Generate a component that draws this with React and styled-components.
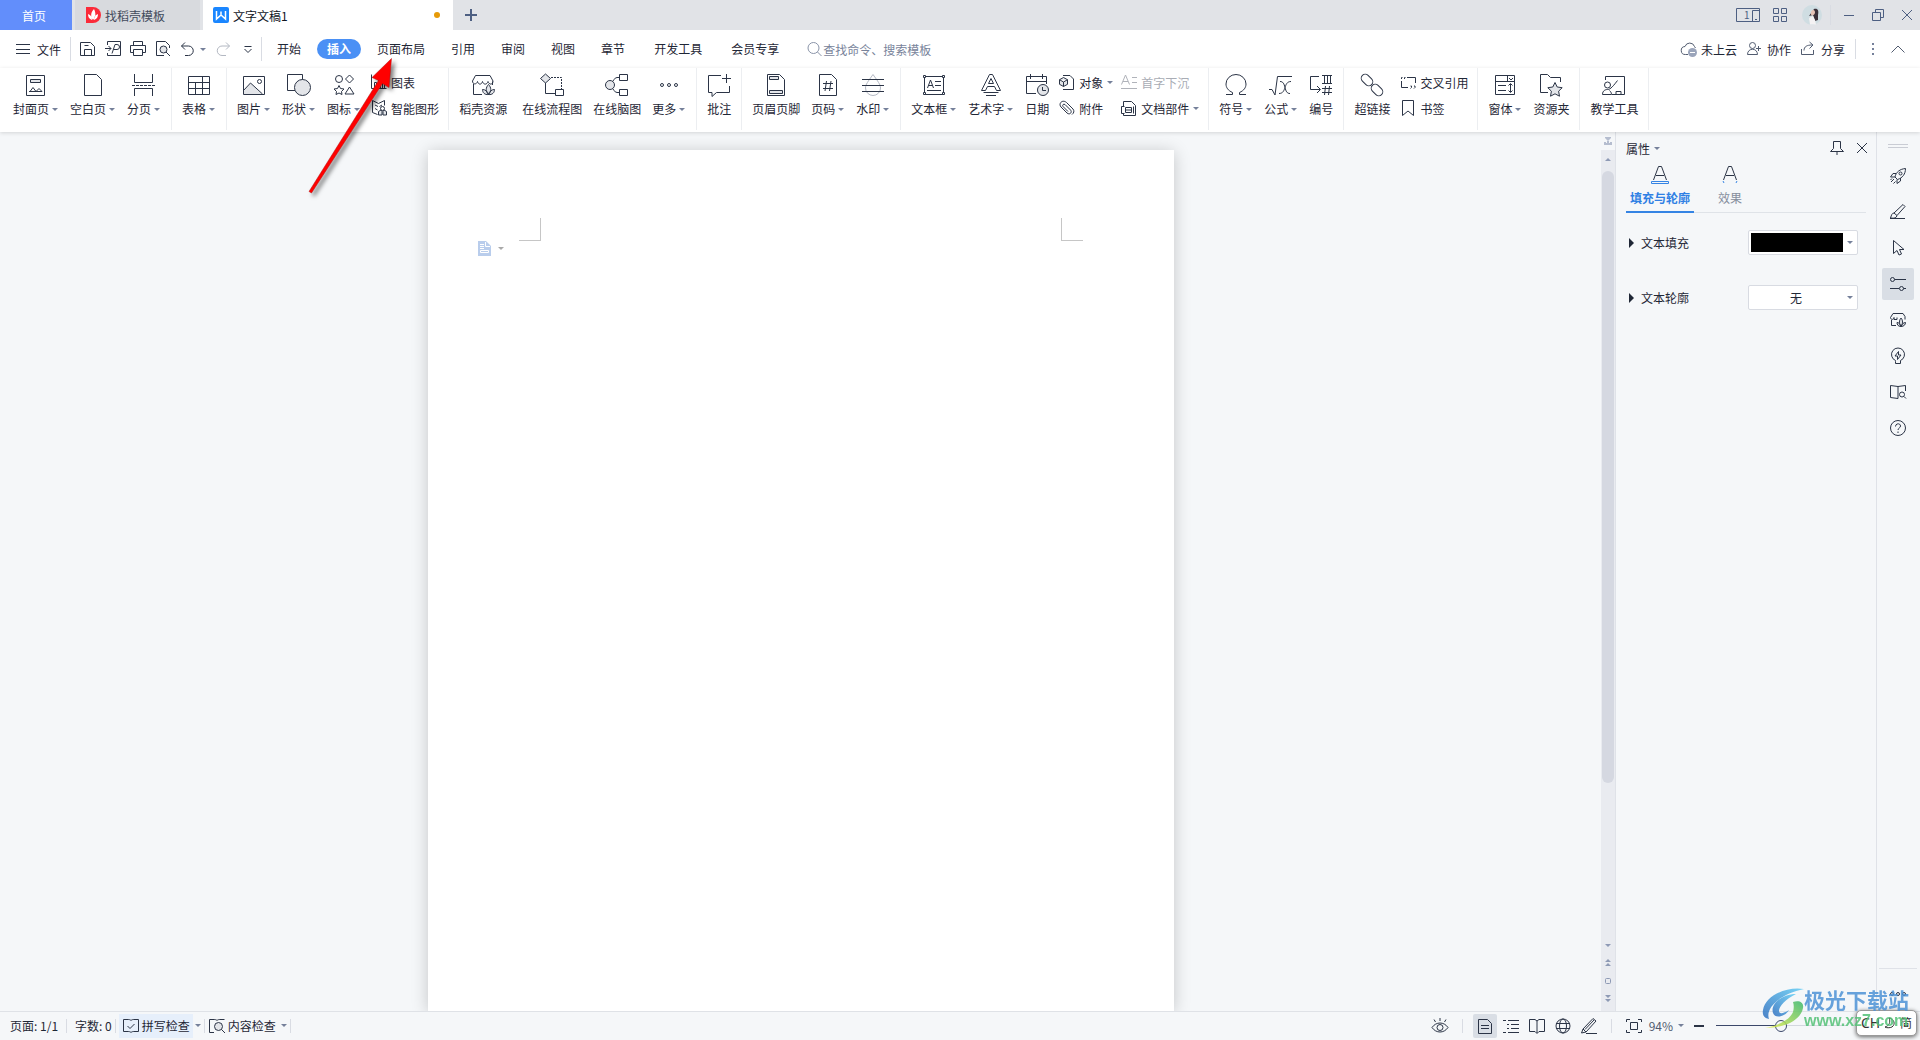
import React, { useState } from 'react'
import styled, { createGlobalStyle, css } from 'styled-components'

const GlobalStyle = createGlobalStyle`
    * {
        box-sizing: border-box;
    }
    body {
        margin: 0;
        background-color: #f5f7f9;
    }
    body, button, input, select {
        font-family: 'Noto Sans CJK SC', 'Noto Sans', sans-serif;
        font-size: 12px;
        color: #1f2736;
    }
    button {
        padding: 0;
        border: none;
        background: none;
        cursor: pointer;
        white-space: nowrap;
    }
`

const Window = styled.div`
    position: relative;
    display: flex;
    flex-direction: column;
    min-height: 100vh;
    overflow: hidden;
    line-height: 18px;
`

const Svg = styled.svg`
    display: block;
    flex: none;
    fill: none;
    stroke: ${props => props.$color || '#2b3446'};
    stroke-width: 1;
    overflow: visible;
`

const Caret = styled.span`
    flex: none;
    width: 0;
    height: 0;
    border-left: 3px solid transparent;
    border-right: 3px solid transparent;
    border-top: 3px solid ${props => props.$color || '#75809a'};
`

const Divider = styled.span`
    flex: none;
    width: 1px;
    height: ${props => props.$height || 24}px;
    margin: 0 ${props => props.$gap || 0}px;
    background-color: #d9dce3;
`

/* ---------- title bar ---------- */

const TitleBar = styled.header`
    display: flex;
    align-items: center;
    height: 30px;
    padding-right: 2px;
    background-color: #e1e3e7;
`
const HomeTab = styled.button`
    width: 72px;
    height: 30px;
    margin-right: 3px;
    padding-right: 4px;
    color: white;
    background-color: #628efb;
`
const DocTab = styled.button`
    display: flex;
    align-items: center;
    gap: 4px;
    height: 30px;
    width: ${props => props.$active ? 250 : 125}px;
    margin-right: ${props => props.$active ? 6 : 3}px;
    padding: 0 13px 0 ${props => props.$active ? 9 : 10}px;
    color: ${props => props.$active ? '#10151f' : '#434b5c'};
    background-color: ${props => props.$active ? '#ffffff' : '#d8dade'};
`
const UnsavedDot = styled.i`
    width: 6px;
    height: 6px;
    margin-left: auto;
    border-radius: 50%;
    background-color: #e69a08;
`
const IconButton = styled.button`
    display: flex;
    align-items: center;
    justify-content: center;
    flex: none;
    width: ${props => props.$size || 24}px;
    height: ${props => props.$size || 24}px;
    border-radius: 2px;
    background-color: ${props => props.$active ? '#d9dee5' : 'transparent'};
`
const WindowTools = styled.div`
    display: flex;
    align-items: center;
    margin-left: auto;
    gap: 4px;
`
const WindowButtons = styled.div`
    display: flex;
    align-items: center;
    gap: 7px;
`

/* ---------- menu ---------- */

const MenuBar = styled.nav`
    display: flex;
    align-items: center;
    height: 38px;
    padding: 0 14px 0 16px;
    background-color: white;
`
const MenuButton = styled.button`
    display: flex;
    align-items: center;
    gap: ${props => props.$gap || 4}px;
`
const QuickTools = styled.div`
    display: flex;
    align-items: center;
    gap: 9px;
`
const MenuTabs = styled.div`
    display: flex;
    gap: 6px;
`
const MenuTab = styled.button`
    height: 20px;
    padding: 0 ${props => props.$wide ? 13 : 10}px;
    border-radius: 10px;
    line-height: 20px;
    ${props => props.$active && css`
        color: white;
        font-weight: bold;
        background-color: #4a90f5;
    `}
`
const SearchLabel = styled.label`
    display: flex;
    align-items: center;
    margin-left: 18px;
`
const SearchInput = styled.input`
    width: 130px;
    padding: 0;
    border: none;
    outline: none;
    background: transparent;
    &::placeholder {
        color: #78839a;
        opacity: 1;
    }
`
const MenuRight = styled.div`
    display: flex;
    align-items: center;
    gap: 10px;
    margin-left: auto;
`

/* ---------- ribbon ---------- */

const Ribbon = styled.section`
    position: relative;
    z-index: 1;
    display: flex;
    height: 64px;
    padding: 0 3px 2px;
    background-color: white;
    box-shadow: 0 1px 4px rgba(0, 0, 0, 0.14);
`
const Group = styled.div`
    display: flex;
    gap: 1px;
    padding: 0 5px;
    border-right: 1px solid #eceef1;
`
const BigButton = styled.button`
    display: flex;
    flex-direction: column;
    align-items: center;
    gap: 3px;
    padding: 5px ${props => props.$caret ? 6 : 5}px 0 5px;
    margin-right: ${props => props.$spaced ? 4 : 0}px;
    line-height: 18px;
`
const BigLabel = styled.span`
    display: flex;
    align-items: center;
    gap: 3px;
`
const SmallGrid = styled.div`
    display: grid;
    grid-template-rows: 26px 26px;
    grid-auto-flow: column;
    padding-top: 1px;
`
const SmallButton = styled.button`
    display: flex;
    align-items: center;
    gap: 4px;
    padding: 0 4px;
    color: ${props => props.disabled ? '#a9adb5' : '#1f2736'};
`

/* ---------- document area ---------- */

const Body = styled.main`
    display: flex;
    flex: 1;
`
const Workspace = styled.div`
    display: flex;
    justify-content: center;
    flex: 1;
    padding-top: 18px;
    overflow: hidden;
`
const Paper = styled.article`
    width: 746px;
    padding: 68px 50px 0;
    background-color: white;
    box-shadow: 0 2px 16px rgba(0, 0, 0, 0.2);
`
const MarginMarks = styled.div`
    display: flex;
    justify-content: space-between;
    padding: 0 41px;
`
const MarginMark = styled.i`
    width: 22px;
    height: 23px;
    border: 0 solid #c6c6c6;
    border-bottom-width: 1px;
    ${props => props.$right ? 'border-left-width: 1px;' : 'border-right-width: 1px;'}
`
const PageOptions = styled.button`
    display: flex;
    align-items: center;
    gap: 7px;
`
const ScrollBar = styled.div`
    display: flex;
    flex-direction: column;
    width: 14px;
`
const ScrollRuler = styled.button`
    display: flex;
    align-items: center;
    justify-content: center;
    height: 18px;
`
const ScrollTrack = styled.div`
    display: flex;
    flex-direction: column;
    flex: 1;
    padding-bottom: 3px;
    background-color: #e9ebf0;
`
const ScrollRail = styled.div`
    flex: 1;
    padding: 0 1px;
`
const ScrollThumb = styled.div`
    height: 80%;
    border-radius: 6px;
    background-color: #d5d8e1;
`
const ScrollButton = styled.button`
    display: flex;
    align-items: center;
    justify-content: center;
    height: ${props => props.$first ? 21 : 18}px;
    padding-bottom: ${props => props.$first ? 3 : 0}px;
`

/* ---------- properties panel ---------- */

const Panel = styled.aside`
    width: 262px;
    padding-left: 10px;
    border: 0 solid #dfe2e8;
    border-width: 0 1px;
`
const PanelHead = styled.div`
    display: flex;
    align-items: center;
    gap: 1px;
    height: 32px;
    padding-right: 2px;
`
const PanelTitle = styled.button`
    display: flex;
    align-items: center;
    gap: 4px;
    margin-right: auto;
`
const PanelTabs = styled.div`
    display: flex;
    gap: 2px;
    height: 49px;
    margin-right: 10px;
    border-bottom: 1px solid #dfe3e8;
`
const PanelTab = styled.button`
    display: flex;
    flex-direction: column;
    align-items: center;
    gap: 5px;
    width: 68px;
    height: 49px;
    line-height: 18px;
    color: ${props => props.$active ? '#2f80e4' : '#868e9d'};
    font-weight: ${props => props.$active ? 'bold' : 'normal'};
    border-bottom: 2px solid ${props => props.$active ? '#3584e4' : 'transparent'};
`
const PanelRows = styled.div`
    display: flex;
    flex-direction: column;
    gap: 30px;
    padding: 17px 18px 0 3px;
`
const PanelRow = styled.div`
    display: flex;
    align-items: center;
    gap: 7px;
    height: 25px;
`
const Triangle = styled.i`
    border: 5px solid transparent;
    border-left-color: #1f2736;
    border-right-width: 0;
`
const Field = styled.div`
    display: flex;
    align-items: center;
    position: relative;
    width: 110px;
    height: 25px;
    margin-left: auto;
    border: 1px solid #d8dbe2;
    border-radius: 2px;
    background-color: white;
`
const FieldCaret = styled(Caret)`
    position: absolute;
    right: 4px;
    pointer-events: none;
`
const ColorButton = styled.button`
    width: 100%;
    height: 100%;
    padding: 2px 14px 2px 2px;
    &::before {
        content: '';
        display: block;
        height: 100%;
        background-color: black;
    }
`
const OutlineSelect = styled.select`
    appearance: none;
    width: 100%;
    padding: 0 14px 0 0;
    border: none;
    outline: none;
    background: transparent;
    text-align: center;
    text-align-last: center;
`

const Rail = styled.aside`
    display: flex;
    flex-direction: column;
    align-items: center;
    gap: 4px;
    width: 43px;
    padding-right: 1px;
`
const RailGrip = styled.i`
    width: 20px;
    height: 4px;
    margin: 12px 0 8px;
    border: 1px solid #c9ccd4;
    border-width: 1px 0;
`
const RailFooter = styled.div`
    display: flex;
    justify-content: center;
    width: 38px;
    height: 43px;
    margin-top: auto;
    padding-top: 21px;
    border-top: 1px solid #dfe2e8;
`

/* ---------- status bar ---------- */

const StatusBar = styled.footer`
    display: flex;
    align-items: center;
    height: 29px;
    padding: 0 74px 1px 10px;
    border-top: 1px solid #dfe2e7;
    background-color: #f5f7f9;
`
const StatusItem = styled.button`
    display: flex;
    align-items: center;
    gap: 3px;
    height: 24px;
    padding: 0 3px 0 4px;
    background-color: ${props => props.$highlight ? '#e6effb' : 'transparent'};
`
const StatusCaret = styled.button`
    display: flex;
    align-items: center;
    width: 11px;
    height: 24px;
    padding-left: 2px;
`
const StatusRight = styled.div`
    display: flex;
    align-items: center;
    margin-left: auto;
`
const ViewButtons = styled.div`
    display: flex;
    gap: 2px;
`
const ZoomButton = styled.button`
    display: flex;
    align-items: center;
    gap: 5px;
    margin: 0 10px 0 3px;
    color: #525c70;
`
const Slider = styled.input`
    appearance: none;
    width: 130px;
    height: 12px;
    margin: 0 0 0 12px;
    background: linear-gradient(to right, #3b486a 50%, #d3d7df 50%) center / 100% 1px no-repeat;
    &::-webkit-slider-thumb {
        appearance: none;
        width: 12px;
        height: 12px;
        border: 1px solid #3b486a;
        border-radius: 50%;
        background-color: #f5f7f9;
    }
`

/* ---------- things that float over the window ---------- */

const Arrow = styled.svg`
    position: absolute;
    z-index: 3;
    top: 50px;
    left: 300px;
    pointer-events: none;
    filter: drop-shadow(3px 3px 2px rgba(0, 0, 0, 0.5));
`
const ImeBar = styled.div`
    position: absolute;
    z-index: 2;
    right: 3px;
    bottom: 4px;
    display: flex;
    align-items: center;
    justify-content: center;
    gap: 4px;
    width: 61px;
    height: 26px;
    border: 1px solid #9a9a9a;
    border-radius: 5px;
    background-color: white;
    box-shadow: 0 1px 4px rgba(0, 0, 0, 0.6);
    color: #333333;
`
const ImeMode = styled.span`
    font-family: 'Noto Sans', sans-serif;
    font-size: 14px;
`
const Watermark = styled.div`
    position: absolute;
    z-index: 3;
    right: 11px;
    bottom: 8px;
    display: flex;
    opacity: 0.85;
    pointer-events: none;
`
const WatermarkText = styled.div`
    display: flex;
    flex-direction: column;
    font-size: 21px;
    font-weight: bold;
    line-height: 22px;
    color: #4e93d6;
`
const WatermarkUrl = styled.span`
    font-family: 'Liberation Sans', Arial, sans-serif;
    font-size: 16px;
    color: #55c278;
`

const soft = '#e3e5e9'

/* 24px drawings for the large ribbon buttons */
const bigIcons = {
    cover: <>
        <path d="M2.5 2.5h18v20h-18z" />
        <path d="M6.5 6.5h10v3h-10z" fill={soft} />
        <path d="M5 18.5h13M6 18.5l3-4 3 4M12 18.5l3-3 3 3" />
    </>,
    blank: <path d="M3.5 1.5h12l5 5v16h-17z" />,
    pageBreak: <>
        <path d="M2.5 1v8.5h18V1M2.5 23v-7.5h18V23" />
        <path d="M0 12.5h23" strokeDasharray="3 1" />
    </>,
    table: <path d="M1.5 3.5h21v18h-21zM1.5 9.5h21M1.5 15.5h21M8.5 9.5v12M15.5 3.5v18" />,
    picture: <>
        <path d="M2 17.5l6.5-7.5L20.500 21H2z" fill={soft} stroke="none" />
        <path d="M1.5 3.5h21v18h-21zM1.5 17.5l7-7.5 12 11" />
        <circle cx="17.5" cy="8.5" r="2" />
    </>,
    shapes: <>
        <path d="M.5 1.5h15v16H.5z" />
        <circle cx="15.500" cy="14.5" r="8" fill={soft} />
    </>,
    glyphs: <>
        <circle cx="7" cy="6" r="3.5" />
        <path d="M17.5 2l4 4-4 4-4-4zM17.5 14l4.500 7h-9zM7 12.500l1.500 3 3.500.5-2.500 2.500.5 3-3-1.500-3 1.500.5-3L2 16l3.500-.5z" />
    </>,
    store: <>
        <path d="M4.500 2.500H19l3 5.500c0 4-4 4-5 .5-1 3.500-4.500 3.500-5.500 0-1 3.500-4 3.500-5 0-1 3.500-5 3-5-.5zM2.500 11v10.500H11M21.500 8.500V12" />
        <path d="M17.500 11.500c3 3 3 7 0 10-3-3-3-7 0-10zM17.500 21.500c-4 .5-6-2-6-5 3 0 5 2 6 5zM17.500 21.500c4 .5 6-2 6-5-3 0-5 2-6 5z" fill={soft} />
    </>,
    flow: <>
        <path d="M5.500 9v11.500H15" />
        <path d="M11 4.500h10.500V16" strokeDasharray="2 1" />
        <path d="M5.500 1l5 4.500-5 4.500-5-4.500z" fill={soft} />
        <path d="M15.500 16.500h8v6h-8z" fill="white" />
    </>,
    mind: <>
        <path d="M14 4.500h-2c-3 0-3 4-6 5M14 19.500h-2c-3 0-3-4-6-5" />
        <circle cx="5" cy="12" r="4.500" fill={soft} />
        <path d="M14.500 1.500h8v6h-8zM14.500 16.500h8v6h-8z" />
    </>,
    more: <>
        <circle cx="5" cy="12" r="1.500" />
        <circle cx="12" cy="12" r="1.500" />
        <circle cx="19" cy="12" r="1.500" />
    </>,
    comment: <path d="M14 2.500H1.500v17H5v4l4.500-4h13V13M19.500 1v9M15 5.500h9" />,
    headerFooter: <>
        <path d="M3.500 1.500h12l5 5v16h-17z" />
        <path d="M5.500 3.500h9v3h-9zM5.500 17.500h13v3h-13z" fill={soft} />
    </>,
    pageNumber: <path d="M3.500 1.500h12l5 5v16h-17zM7 10.500h10M7 15.500h10M10.500 8L9 18M15 8l-1.500 10" />,
    watermark: <>
        <path d="M12 1.500c5 7 7.500 10 7.500 13.500a7.500 7.500 0 0 1-15 0c0-3.500 2.500-6.500 7.500-13.500z" stroke="#b4b9c4" />
        <path d="M1 6.500h22M1 12.500h22M1 18.500h22" />
    </>,
    textBox: <>
        <path d="M2.500 3.500h19v18h-19zM5.500 15l3-8 3 8M6.500 12.500h4M13 8.500h6M13 12.500h6M5 17.500h14" />
        <path d="M1.500 2.500h2v2h-2zM20.500 2.500h2v2h-2zM1.500 19.500h2v2h-2zM20.500 19.500h2v2h-2z" fill="white" />
    </>,
    wordArt: <path d="M10.500 1.500h3l8 16h-4l-2-4h-7l-2 4h-4zM9.500 10.500h5L12 5.500zM4.500 19.500h15M7 22.500h10" />,
    date: <>
        <path d="M11 20.500H1.500v-17h20V11M1.500 8.500h20M5.500 1v5M17.500 1v5" />
        <circle cx="18" cy="17" r="5.500" fill={soft} />
        <path d="M17.500 14v3.500H21" />
    </>,
    omega: <path d="M2 21.500h6.500v-2C4 17.500 2 14.500 2 11a10 9.500 0 0 1 20 0c0 3.500-2 6.500-6.500 8.500v2H22" />,
    formula: <path d="M0 16.500h3L6 22 8.500 3.500H23M10 20.500c4 0 5-3 6-6s2-6 6-6M11 8.500c3 0 4 2 5 6s2 6 5 6" />,
    numbering: <path d="M10 3.500H1.500v13H11M8 13l3.500 3.500L8 20M13 2.500h10M13 10.500h10M15.500 2.500v8M18.500 2.500v8M21.500 2.500v8M13 15.500h10M13 19.500h10M16.500 13l-1 9M20.500 13l-1 9" />,
    link: <>
        <rect x="-4" y="-6.500" width="8" height="13" rx="4" transform="translate(7 7) rotate(-45)" />
        <rect x="-4" y="-6.500" width="8" height="13" rx="4" transform="translate(17 17) rotate(-45)" />
    </>,
    form: <>
        <path d="M14.500 3v6" />
        <path d="M2.500 2.500h19v19h-19zM2.500 8.500h19M16 5l2 2 2-2M5 12.500h8M5 17.500h8M17.500 11v8M15.500 12.500l2-2 2 2M15.500 17.500l2 2 2-2" />
    </>,
    folder: <>
        <path d="M9 19.500H1.500v-18h7l3 3h10V9" />
        <path d="M16 9.500l2.200 4.500 5 .7-3.600 3.500.9 5-4.500-2.400-4.500 2.400.9-5-3.600-3.500 5-.7z" fill={soft} />
    </>,
    teach: <>
        <path d="M3.500 7V3.500h19v18H10M14 21.500v-3h5v3" />
        <circle cx="5.500" cy="12" r="3" />
        <path d="M.5 21.500c0-4 3-5 5-5 2 0 4-1 10-9M.5 21.500h9c0-2-1-3-2-4" />
    </>,
}

/* 16px drawings: quick tools, small ribbon buttons, side rail, status bar */
const icons = {
    burger: <path d="M0 3.500h14M0 8.500h14M0 12.500h14" />,
    save: <path d="M.5 1.500h10l4 4v9H.5zM4.500 14.500v-6h7v6M4.500 4.500h4" />,
    exportPdf: <path d="M2.500 4V.5h13v14h-13V12M0 7.500h6M3.500 5L6 7.500 3.500 10M7 12.500l3-9h2a2 2 0 0 1 0 5H8.500" />,
    print: <path d="M3.500 4.500v-4h9v4M3.500 11.500h-3v-7h15v7h-3M3.500 8.500h9v6h-9z" />,
    preview: <>
        <path d="M9 14.500H1.500V.5h9l4 4V7" />
        <circle cx="8.500" cy="8.500" r="3.500" fill={soft} />
        <path d="M11 11l4 4" />
    </>,
    undo: <path d="M5 1.500L1.500 5 5 8.500M1.500 5h7a4.500 4.500 0 0 1 0 9.500H5" />,
    redo: <path d="M11 1.500L14.500 5 11 8.500M14.500 5H7a4.500 4.500 0 0 0 0 9.500h4" />,
    more: <path d="M4.500 5.500h7M4.500 8l3.500 3.500L11.500 8" />,
    search: <>
        <circle cx="6.500" cy="7" r="5.500" />
        <path d="M10.500 11l4 4" />
    </>,
    cloud: <>
        <path d="M7 13.500H4.500a4 4 0 0 1-.5-8 5 5 0 0 1 9.500 0l1 1.500" />
        <circle cx="11.500" cy="11.500" r="4.500" fill="#9ba5bb" stroke="none" />
        <path d="M9 11.500h5" stroke="white" />
    </>,
    people: <>
        <circle cx="5.500" cy="4.500" r="3" />
        <path d="M.5 13.500c0-7 10-7 10 0zM9 7.500h5M11.500 5v5" />
    </>,
    share: <path d="M.5 8v5.500h12V9M3 9.500c0-4 3-5.500 8-5.500M8.500 1L12 4 8.500 7.500" />,
    up: <path d="M1.500 11.500L8 5l6.500 6.500" />,
    chart: <path d="M.5.5v14h15M3.500 14V8.500h2V14M7.500 14V4.500h2V14M11.500 14V6.500h2V14" />,
    smart: <>
        <path d="M13.500 5.500v-5l-6 3-6-3v12l5 2M4 5l3 1.500M4 8.500l2.500 1.500M11 5L8.500 6.500" />
        <circle cx="11.500" cy="8.500" r="2" />
        <path d="M10 10l-2.500 1.500v3.500h3.500v-3.500zM13 10l2.500 1.500v3.500H12v-3.500z" fill={soft} />
    </>,
    object: <>
        <path d="M4 1.500h7l3.500 3.500v10.500H4" />
        <path d="M4.500 3.500l4 2.200v4.600l-4 2.200-4-2.200V5.700zM.5 5.700l4 2.300 4-2.300M4.500 8v4.500" fill={soft} />
    </>,
    clip: <path d="M13 14.500c2-1.500 2.500-3.500 1-5.500L7.500 2.500C3.500-1-1 3.500 2 7l6 6c3 2.500 5.500-1 3.500-3L6 4.500C4.500 3.500 3 5 4 6.500l5 5" />,
    dropCap: <path d="M.5 10.500l4-9.500 4 9.500M2 7.500h5M11 3.500h5M11 8.500h5M0 14.500h16" />,
    parts: <path d="M2.500 6V1.500h8l4 4v10h-12V14M.5 6.500h3M.5 6.500v7h3M4.500 7.500h6v5h-6zM4.500 10h6M12.500 6.500v7" />,
    cross: <path d="M1.500 5V3.500h1M4.500 5V3.500h1M7 3.500h8.500V9M1.500 7v6.500H8M10.500 12h1v1.500l-1 1M14 12h1v1.500l-1 1" />,
    bookmark: <path d="M2.500.5h11v15L8 11l-5.500 4.500z" />,
    pin: <path d="M4.500 1.500h7v7l3 3h-13l3-3zM8 11.500V15" />,
    close: <path d="M3 3l10 10M13 3L3 13" />,
    rocket: <>
        <path d="M5 9c1-5 5-8 10.500-8.500C15.500 6 12.500 10 7.500 11.500L5 9zM6 5.500H3L.5 9H5M10.500 10v3L7 15.500v-4M4 11l-3 3M2 10.500L.5 12M5.500 13.500l-2 2" />
        <circle cx="10.500" cy="5.500" r="1.500" />
    </>,
    brush: <path d="M0 14.500h15M13 .5l2 2-8 9L4 9zM4 9c-2 0-2.500 2-3.500 5 4 .5 6 0 6.500-2.500" />,
    cursor: <path d="M3.500.5v13l3.500-3L9 15l2.500-1-2-4.500H14z" />,
    sliders: <>
        <path d="M4.500 3.500H16M0 12.500h9M13.500 12.500H16" />
        <circle cx="2.500" cy="3.500" r="2" />
        <circle cx="11.500" cy="12.500" r="2" />
    </>,
    store: <>
        <path d="M3 1.500h10l2 3v3M3 1.500L.5 5.500c0 2.500 3.500 2.500 3.500 0v2h3v-2M1.500 8v5.500H6" />
        <path d="M11 6c2 2 2 6 0 8.500-2-2.500-2-6.500 0-8.500zM11 14.500c-3 0-4-2-4-4 2 0 3 1.500 4 4zM11 14.500c3 0 4.500-2 4.500-4-2 0-3.500 1.500-4.500 4z" fill={soft} />
    </>,
    bulb: <path d="M5.500 13.500v-1a6.500 6.500 0 1 1 5 0v3h-5zM8.500 3.500L5 8h2.500v3.500L11 7H8.500z" />,
    bookSearch: <>
        <path d="M8 14.500l-7.500-1v-12l7.500 1 7.500-1V7M8 2.500v12" />
        <circle cx="12" cy="10.500" r="2.500" />
        <path d="M14 12.500l2 2" />
    </>,
    help: <>
        <circle cx="8" cy="8" r="7.500" />
        <path d="M5.500 6.500c0-3.500 5-3.500 5-.5 0 2-2.500 2-2.500 4M8 11.500V13" />
    </>,
    dots: <>
        <circle cx="2" cy="4" r="1.500" />
        <circle cx="8" cy="4" r="1.500" />
        <circle cx="14" cy="4" r="1.500" />
    </>,
    spell: <path d="M8 14.500c-1-1-2-1-3-1H.5v-12H5c1 0 2 0 3 1 1-1 2-1 3-1h4.500v12H11c-1 0-2 0-3 1zM4.500 8L7 10.500 11.500 6" />,
    inspect: <>
        <path d="M5 14.500H.5v-13H5c1 0 2 0 3 1 1-1 2-1 3-1h4.500" />
        <circle cx="9.500" cy="8.500" r="4" fill={soft} />
        <path d="M12.500 11.500L16 15" />
    </>,
    eye: <>
        <path d="M0 9.500c4-6 12-6 16 0-4 6-12 6-16 0zM8 3V0M3.500 4L2 1.500M12.500 4L14 1.500" />
        <circle cx="8" cy="9.500" r="3" />
    </>,
    page: <path d="M1.500 1.500h9l4 4v10h-13zM4 7.500h8M4 10.500h8" />,
    list: <path d="M0 2.500h3M5 2.500h11M4 6.500h2M8 6.500h8M4 10.500h2M8 10.500h8M0 14.500h3M5 14.500h11" />,
    book: <path d="M8 15.500l-2-2H.5v-12H6L8 3l2-1.500h5.500v12H10zM8 3v12" />,
    globe: <>
        <circle cx="8" cy="8" r="7" />
        <ellipse cx="8" cy="8" rx="3.500" ry="7" />
        <path d="M1 5.500h14M1 10.500h14" />
    </>,
    pen: <path d="M5 15.500h11M12 .5L15 3 5 14l-4.500 1L2 11zM2 11l3 3M4 11.500L13 2" />,
    fit: <path d="M.5 4V1.500H4M12 1.500h3.500V4M15.500 12v2.500H12M4 14.500H.5V12M4.500 4.500h7v7h-7z" />,
    minus: <path d="M0 8h10" strokeWidth="2" />,
}

const Icon = ({ name, color, width = 16 }) => (
    <Svg width={width} height="16" viewBox={`0 0 ${width} 16`} $color={color} aria-hidden="true">
        {icons[name]}
    </Svg>
)

const Big = ({ icon, label, caret, spaced }) => (
    <BigButton $caret={caret} $spaced={spaced}>
        <Svg width="24" height="24" viewBox="0 0 24 24" aria-hidden="true">{bigIcons[icon]}</Svg>
        <BigLabel>{label}{caret && <Caret />}</BigLabel>
    </BigButton>
)

const Small = ({ icon, label, caret, disabled }) => (
    <SmallButton disabled={disabled}>
        <Icon name={icon} color={disabled && '#b0b3ba'} />
        {label}
        {caret && <Caret />}
    </SmallButton>
)

const menuTabs = ['开始', '插入', '页面布局', '引用', '审阅', '视图', '章节', '开发工具', '会员专享']
const railTools = [
    ['rocket', '快捷'], ['brush', '样式'], ['cursor', '选择'], ['sliders', '属性'],
    ['store', '资源'], ['bulb', '推荐'], ['bookSearch', '查阅'], ['help', '帮助'],
]
const viewModes = [
    ['page', '页面视图'], ['list', '大纲'], ['book', '阅读版式'], ['globe', 'Web 版式'], ['pen', '写作模式'],
]

const App = () => {

    const [menuTab, setMenuTab] = useState('插入')
    const [railTool, setRailTool] = useState('sliders')
    const [viewMode, setViewMode] = useState('page')

    return (
        <Window>
            <GlobalStyle />
            <TitleBar>
                <HomeTab>首页</HomeTab>
                <DocTab>
                    <Svg width="16" height="16" viewBox="0 0 16 16" aria-hidden="true">
                        <path d="M1 0h7a8 8 0 0 1 0 16H1z" fill="#fb2b3a" stroke="none" />
                        <path d="M8 13C5 9 6 5 9 2c2 4 2 8-1 11zM7 13c-3-1-4-3-4-6 3 1 4 3 4 6zM9 13c3-1 4-3 4-6-3 1-4 3-4 6z" fill="white" stroke="none" />
                    </Svg>
                    找稻壳模板
                </DocTab>
                <DocTab $active>
                    <Svg width="17" height="16" viewBox="0 0 17 16" aria-hidden="true">
                        <rect x="1" width="16" height="16" rx="2" fill="#1a86ff" stroke="none" />
                        <path d="M4.500 4v8L9 8l4.500 4V4M9 4.500V8" stroke="white" strokeWidth="1.500" />
                    </Svg>
                    文字文稿1
                    <UnsavedDot />
                </DocTab>
                <IconButton aria-label="新建">
                    <Svg width="12" height="12" viewBox="0 0 12 12" $color="#4d5f82">
                        <path d="M6 0v12M0 6h12" strokeWidth="2" />
                    </Svg>
                </IconButton>
                <WindowTools>
                    <IconButton $size={28} aria-label="窗口布局">
                        <Svg width="24" height="15" viewBox="0 0 24 15" $color="#4d5f82">
                            <path d="M.5.5h23v13H.5zM23.500 2.500h-7v11M19 11.500h2" />
                            <text x="8" y="11" fontSize="10" fill="#4d5f82" stroke="none">1</text>
                        </Svg>
                    </IconButton>
                    <IconButton $size={28} aria-label="应用">
                        <Svg width="14" height="14" viewBox="0 0 14 14" $color="#4d5f82">
                            <path d="M.5.5h5v5h-5zM8.500.5h5v5h-5zM.5 8.500h5v5h-5zM8.500 8.500h5v5h-5z" />
                        </Svg>
                    </IconButton>
                    <IconButton $size={28} aria-label="账号">
                        <Svg width="20" height="20" viewBox="0 0 20 20">
                            <circle cx="10" cy="10" r="10" fill="#cfdde2" stroke="none" />
                            <path d="M12 4c4-1 5 2 4 6v5l-3 1-2-6-4 1z" fill="#3a2f38" stroke="none" />
                            <path d="M10 5.500c2-1 3 0 3 2s-2 3-3 3-2-3 0-5z" fill="#e6c3b6" stroke="none" />
                            <path d="M7 13l4-2 2 4 1 4.500H8z" fill="#f4f2f3" stroke="none" />
                        </Svg>
                    </IconButton>
                    <WindowButtons>
                        <Divider $height={20} />
                        <IconButton $size={22} aria-label="最小化">
                            <Svg width="10" height="10" viewBox="0 0 10 10" $color="#4d5f82"><path d="M0 5.500h10" /></Svg>
                        </IconButton>
                        <IconButton $size={22} aria-label="还原">
                            <Svg width="12" height="12" viewBox="0 0 12 12" $color="#4d5f82">
                                <path d="M.5 3.500h8v8h-8zM3.500 3.500v-3h8v8h-3" />
                            </Svg>
                        </IconButton>
                        <IconButton $size={22} aria-label="关闭"><Icon name="close" color="#4d5f82" /></IconButton>
                    </WindowButtons>
                </WindowTools>
            </TitleBar>

            <MenuBar>
                <MenuButton $gap={7}><Icon name="burger" width={14} />文件</MenuButton>
                <Divider $gap={9} />
                <QuickTools>
                    <MenuButton aria-label="保存"><Icon name="save" /></MenuButton>
                    <MenuButton aria-label="输出为PDF"><Icon name="exportPdf" /></MenuButton>
                    <MenuButton aria-label="打印"><Icon name="print" /></MenuButton>
                    <MenuButton aria-label="打印预览"><Icon name="preview" /></MenuButton>
                    <MenuButton aria-label="撤消"><Icon name="undo" /><Caret /></MenuButton>
                    <MenuButton aria-label="恢复"><Icon name="redo" color="#b3b8c2" /></MenuButton>
                    <MenuButton aria-label="自定义"><Icon name="more" /></MenuButton>
                </QuickTools>
                <Divider $gap={5} />
                <MenuTabs>
                    {menuTabs.map(tab => (
                        <MenuTab
                            key={tab}
                            $active={tab === menuTab}
                            $wide={tab === '开发工具'}
                            onClick={() => setMenuTab(tab)}
                        >
                            {tab}
                        </MenuTab>
                    ))}
                </MenuTabs>
                <SearchLabel>
                    <Icon name="search" color="#8a94a9" />
                    <SearchInput aria-label="查找命令、搜索模板" placeholder="查找命令、搜索模板" />
                </SearchLabel>
                <MenuRight>
                    <MenuButton><Icon name="cloud" color="#525c70" />未上云</MenuButton>
                    <MenuButton><Icon name="people" color="#525c70" />协作</MenuButton>
                    <MenuButton><Icon name="share" color="#525c70" />分享</MenuButton>
                    <Divider $height={20} />
                    <MenuButton aria-label="更多">
                        <Svg width="14" height="16" viewBox="0 0 14 16" $color="#75809a">
                            <path d="M7 2v2M7 7v2M7 12v2" strokeWidth="2" />
                        </Svg>
                    </MenuButton>
                    <MenuButton aria-label="收起功能区"><Icon name="up" color="#525c70" /></MenuButton>
                </MenuRight>
            </MenuBar>

            <Ribbon>
                <Group>
                    <Big icon="cover" label="封面页" caret />
                    <Big icon="blank" label="空白页" caret />
                    <Big icon="pageBreak" label="分页" caret />
                </Group>
                <Group>
                    <Big icon="table" label="表格" caret />
                </Group>
                <Group>
                    <Big icon="picture" label="图片" caret />
                    <Big icon="shapes" label="形状" caret />
                    <Big icon="glyphs" label="图标" caret />
                    <SmallGrid>
                        <Small icon="chart" label="图表" />
                        <Small icon="smart" label="智能图形" />
                    </SmallGrid>
                </Group>
                <Group>
                    <Big icon="store" label="稻壳资源" spaced />
                    <Big icon="flow" label="在线流程图" />
                    <Big icon="mind" label="在线脑图" />
                    <Big icon="more" label="更多" caret />
                </Group>
                <Group>
                    <Big icon="comment" label="批注" />
                </Group>
                <Group>
                    <Big icon="headerFooter" label="页眉页脚" />
                    <Big icon="pageNumber" label="页码" caret />
                    <Big icon="watermark" label="水印" caret />
                </Group>
                <Group>
                    <Big icon="textBox" label="文本框" caret />
                    <Big icon="wordArt" label="艺术字" caret />
                    <Big icon="date" label="日期" />
                    <SmallGrid>
                        <Small icon="object" label="对象" caret />
                        <Small icon="clip" label="附件" />
                        <Small icon="dropCap" label="首字下沉" disabled />
                        <Small icon="parts" label="文档部件" caret />
                    </SmallGrid>
                </Group>
                <Group>
                    <Big icon="omega" label="符号" caret />
                    <Big icon="formula" label="公式" caret />
                    <Big icon="numbering" label="编号" />
                </Group>
                <Group>
                    <Big icon="link" label="超链接" />
                    <SmallGrid>
                        <Small icon="cross" label="交叉引用" />
                        <Small icon="bookmark" label="书签" />
                    </SmallGrid>
                </Group>
                <Group>
                    <Big icon="form" label="窗体" caret />
                    <Big icon="folder" label="资源夹" />
                </Group>
                <Group>
                    <Big icon="teach" label="教学工具" />
                </Group>
            </Ribbon>

            <Body>
                <Workspace>
                    <Paper>
                        <MarginMarks>
                            <MarginMark />
                            <MarginMark $right />
                        </MarginMarks>
                        <PageOptions aria-label="页面选项">
                            <Svg width="13" height="15" viewBox="0 0 13 15">
                                <path d="M0 0h8l5 5v10H0z" fill="#b9cdec" stroke="none" />
                                <path d="M2 3.500h4M2 5.500h4M2 7.500h4M7.500 1v4.500H12M2.500 9.500h8v2h-8z" stroke="white" />
                            </Svg>
                            <Caret $color="#a9a9a9" />
                        </PageOptions>
                    </Paper>
                </Workspace>
                <ScrollBar>
                    <ScrollRuler aria-label="标尺">
                        <Svg width="8" height="8" viewBox="0 0 8 8">
                            <path d="M1 0h6v1L4 4 1 1zM0 5h2v1h1V4h2v2h1V5h2v3H0z" fill="#b5bdcf" stroke="none" />
                        </Svg>
                    </ScrollRuler>
                    <ScrollTrack>
                        <ScrollButton $first aria-label="向上滚动">
                            <Svg width="6" height="3" viewBox="0 0 6 3"><path d="M3 0l3 3H0z" fill="#8e9ab5" stroke="none" /></Svg>
                        </ScrollButton>
                        <ScrollRail><ScrollThumb /></ScrollRail>
                        <ScrollButton aria-label="向下滚动">
                            <Svg width="6" height="3" viewBox="0 0 6 3"><path d="M0 0h6L3 3z" fill="#8e9ab5" stroke="none" /></Svg>
                        </ScrollButton>
                        <ScrollButton aria-label="上一页">
                            <Svg width="6" height="8" viewBox="0 0 6 8"><path d="M3 0l3 3H0zM3 4l3 3H0z" fill="#8e9ab5" stroke="none" /></Svg>
                        </ScrollButton>
                        <ScrollButton aria-label="选择浏览对象">
                            <Svg width="6" height="6" viewBox="0 0 6 6" $color="#8e9ab5"><rect x=".5" y=".5" width="5" height="5" rx="1" /></Svg>
                        </ScrollButton>
                        <ScrollButton aria-label="下一页">
                            <Svg width="6" height="8" viewBox="0 0 6 8"><path d="M0 0h6L3 3zM0 4h6L3 7z" fill="#8e9ab5" stroke="none" /></Svg>
                        </ScrollButton>
                    </ScrollTrack>
                </ScrollBar>

                <Panel>
                    <PanelHead>
                        <PanelTitle>属性<Caret /></PanelTitle>
                        <IconButton aria-label="固定"><Icon name="pin" /></IconButton>
                        <IconButton aria-label="关闭面板"><Icon name="close" /></IconButton>
                    </PanelHead>
                    <PanelTabs>
                        <PanelTab $active>
                            <Svg width="18" height="20" viewBox="0 0 18 20">
                                <path d="M2.500 16l5-13.500h3l5 13.500M5 11.500h8" />
                                <path d="M.5 17.500h17v2H.5z" stroke="#3584e4" />
                            </Svg>
                            填充与轮廓
                        </PanelTab>
                        <PanelTab>
                            <Svg width="18" height="20" viewBox="0 0 18 20">
                                <path d="M2.500 16l5-13.500h3l5 13.500M5 11.500h8" />
                                <path d="M2 17l1 2M16 17l-1 2" stroke="#3584e4" />
                            </Svg>
                            效果
                        </PanelTab>
                    </PanelTabs>
                    <PanelRows>
                        <PanelRow>
                            <Triangle />
                            文本填充
                            <Field>
                                <ColorButton aria-label="文本填充颜色" />
                                <FieldCaret />
                            </Field>
                        </PanelRow>
                        <PanelRow>
                            <Triangle />
                            <label htmlFor="outline">文本轮廓</label>
                            <Field>
                                <OutlineSelect id="outline">
                                    <option>无</option>
                                </OutlineSelect>
                                <FieldCaret />
                            </Field>
                        </PanelRow>
                    </PanelRows>
                </Panel>

                <Rail>
                    <RailGrip />
                    {railTools.map(([name, title]) => (
                        <IconButton
                            key={name}
                            $size={32}
                            $active={name === railTool}
                            aria-label={title}
                            onClick={() => setRailTool(name)}
                        >
                            <Icon name={name} />
                        </IconButton>
                    ))}
                    <RailFooter><Icon name="dots" /></RailFooter>
                </Rail>
            </Body>

            <StatusBar>
                <span>页面: 1/1</span>
                <Divider $height={14} $gap={8} />
                <span>字数: 0</span>
                <Divider $height={14} $gap={3} />
                <StatusItem $highlight><Icon name="spell" />拼写检查</StatusItem>
                <StatusCaret aria-label="拼写检查选项"><Caret /></StatusCaret>
                <Divider $height={14} />
                <StatusItem><Icon name="inspect" />内容检查</StatusItem>
                <StatusCaret aria-label="内容检查选项"><Caret /></StatusCaret>
                <Divider $height={14} />
                <StatusRight>
                    <IconButton aria-label="护眼模式"><Icon name="eye" /></IconButton>
                    <Divider $height={14} $gap={10} />
                    <ViewButtons>
                        {viewModes.map(([name, title]) => (
                            <IconButton
                                key={name}
                                $active={name === viewMode}
                                aria-label={title}
                                onClick={() => setViewMode(name)}
                            >
                                <Icon name={name} />
                            </IconButton>
                        ))}
                    </ViewButtons>
                    <Divider $height={14} $gap={10} />
                    <IconButton aria-label="最佳显示比例"><Icon name="fit" /></IconButton>
                    <ZoomButton>94%<Caret /></ZoomButton>
                    <MenuButton aria-label="缩小"><Icon name="minus" width={10} /></MenuButton>
                    <Slider type="range" min="0" max="188" defaultValue="94" aria-label="显示比例" />
                </StatusRight>
            </StatusBar>

            <Arrow width="110" height="160" viewBox="0 0 110 160" aria-hidden="true">
                <path d="M9 141.500L78.500 30.500 72 27.500 91.500 8.500 89 37.500l-6.500-4L11.500 143z" fill="#ff0000" stroke="#b01515" strokeWidth=".5" />
            </Arrow>

            <ImeBar>
                <ImeMode>CH</ImeMode>
                <Svg width="12" height="12" viewBox="0 0 12 12" $color="#333333">
                    <path d="M5 1c5 1 7 6 3 9-2 1-6 1-7 0 4-1 6-5 4-9z" />
                </Svg>
                <span>简</span>
            </ImeBar>
            <Watermark>
                <svg width="42" height="42" viewBox="0 0 42 42" aria-hidden="true">
                    <defs>
                        <linearGradient id="blue" x1="1" y1="0" x2="0" y2="1">
                            <stop offset="0" stopColor="#62cdf5" />
                            <stop offset="1" stopColor="#2f6fc0" />
                        </linearGradient>
                        <linearGradient id="green" x1="1" y1="0" x2="0" y2="1">
                            <stop offset="0" stopColor="#3cb86c" />
                            <stop offset="1" stopColor="#e6ec4a" />
                        </linearGradient>
                    </defs>
                    <path d="M42 1C24-2 3 8 1 22c-1 5 1 8 6 9C3 20 18 6 42 1z" fill="url(#blue)" />
                    <path d="M34 6C20 6 8 16 11 25c2 6 12 4 16-3-6 4-10 4-10 1 0-5 7-12 17-17z" fill="url(#blue)" />
                    <path d="M31 14c7-2 11 1 10 6-2 12-18 20-38 20 12-2 25-8 28-16 1-4 1-7 0-10z" fill="url(#green)" />
                </svg>
                <WatermarkText>
                    极光下载站
                    <WatermarkUrl>www.xz7.com</WatermarkUrl>
                </WatermarkText>
            </Watermark>
        </Window>
    )
}

export default App
